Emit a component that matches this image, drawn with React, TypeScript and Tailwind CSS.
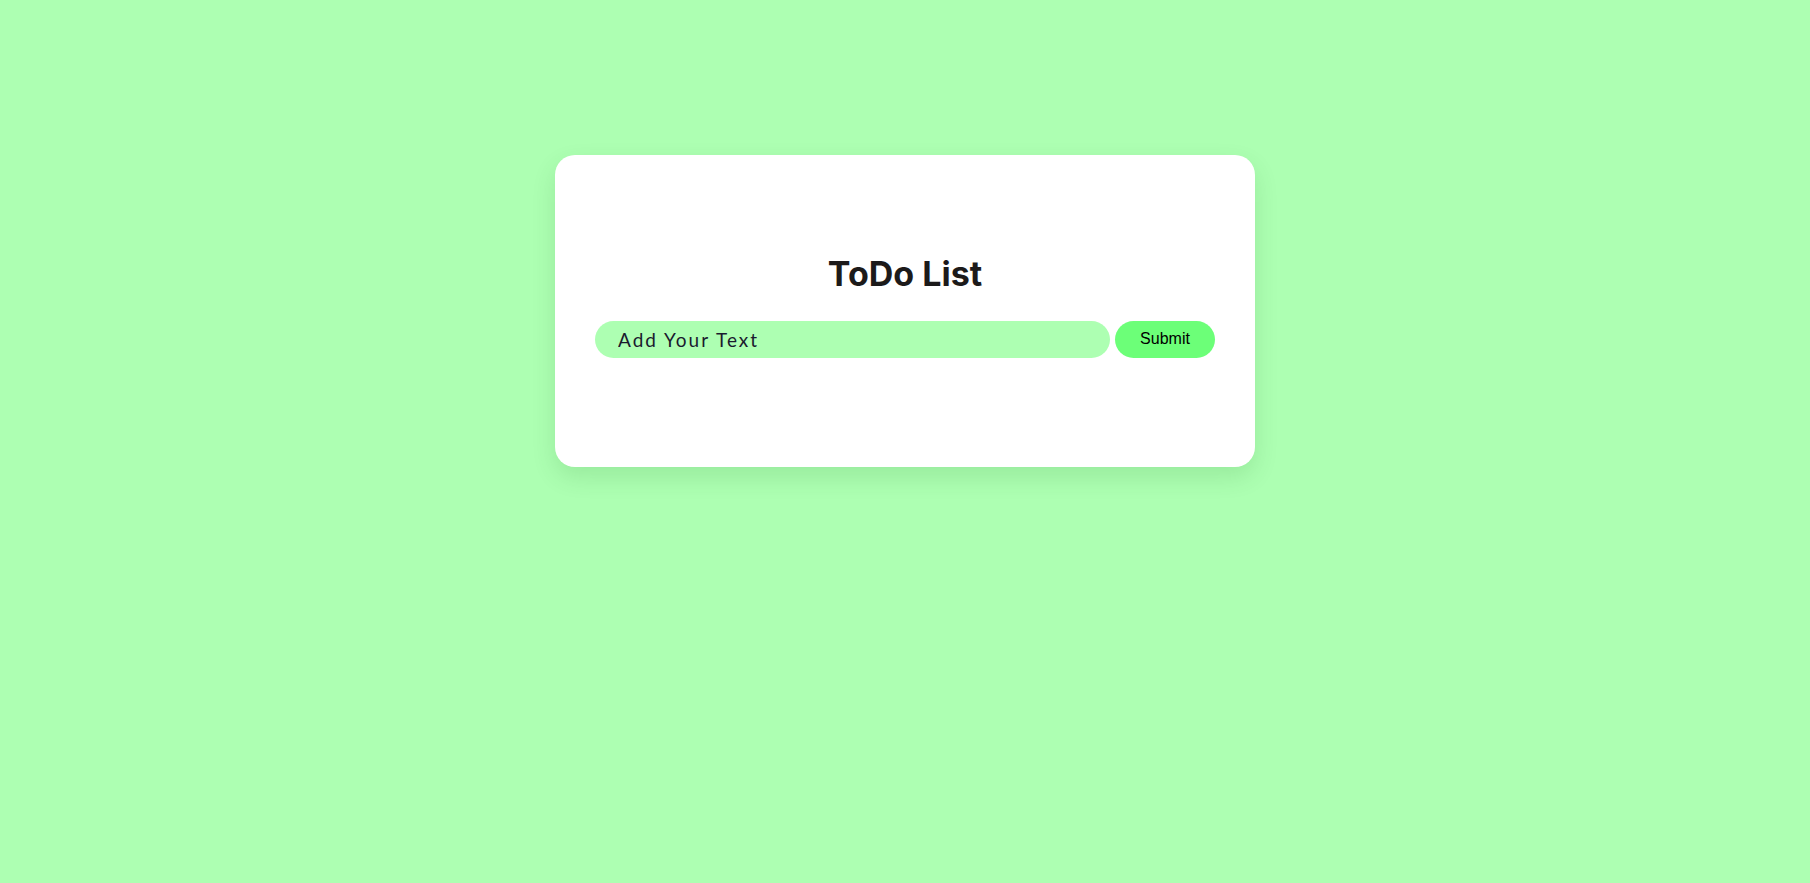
import React from "react";

export default function App() {
  return (
    <div className="min-h-[883px] w-full bg-[#adffb2] flex justify-center pt-[155px]">
      <div className="w-[700px] h-[312px] bg-white rounded-[20px] shadow-[0_10px_25px_rgba(0,80,0,0.12)] flex flex-col justify-center px-[40px] pb-[8px]">
        <h2 className="text-center text-[34px] font-bold text-[#1c1a1a] leading-none font-[Inter,'Noto_Sans',sans-serif]">
          ToDo List
        </h2>
        <div className="flex items-center gap-[5px] mt-[30px]">
          <input
            type="text"
            placeholder="Add Your Text"
            className="w-[515px] h-[37px] rounded-full bg-[#adffb2] pl-[23px] outline-none text-[19px] tracking-[2px] text-[#1a1a2e] placeholder:text-[#1a1a2e] font-[Lato,'Noto_Sans',sans-serif]"
          />
          <button className="w-[100px] h-[37px] rounded-full bg-[#6cff78] text-[16px] text-black font-['Liberation_Sans',Arial,sans-serif]">
            Submit
          </button>
        </div>
      </div>
    </div>
  );
}
